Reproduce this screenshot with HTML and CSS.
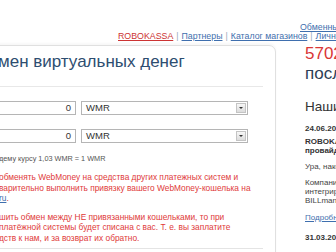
FILE: index.html
```html
<!DOCTYPE html>
<html lang="ru">
<head>
<meta charset="utf-8">
<link rel="stylesheet" href="styles.css">
</head>
<body>
<div class="page">
  <div class="header">
    <div class="nav-top"><a href="#">Обменные пункты</a></div>
    <div class="nav">
      <a class="red" href="#">ROBOKASSA</a><span class="sep">|</span><a href="#">Партнеры</a><span class="sep">|</span><a href="#">Каталог магазинов</a><span class="sep">|</span><a href="#">Личный кабинет</a>
    </div>
  </div>
  <div class="main">
    <div class="card">
      <div class="card-head">
        <h1 class="title">мен виртуальных денег</h1>
      </div>
      <div class="form">
        <div class="row">
          <div class="input">0</div>
          <div class="select"><span>WMR</span><span class="arrow"></span></div>
        </div>
        <div class="row">
          <div class="input">0</div>
          <div class="select"><span>WMR</span><span class="arrow"></span></div>
        </div>
        <div class="rate">дему курсу 1,03 WMR = 1 WMR</div>
        <p class="warn">обменять WebMoney на средства других платежных систем и<br>варительно выполнить привязку вашего WebMoney-кошелька на<br><a href="#">ru</a>.</p>
        <p class="warn">шить обмен между НЕ привязанными кошельками, то при<br>платёжной системы будет списана с вас. Т. е. вы заплатите<br>дств к нам, и за возврат их обратно.</p>
      </div>
      <div class="card-foot"></div>
    </div>
    <div class="side">
      <div class="count">5702</div>
      <div class="count-label">последних</div>
      <h2 class="news-title">Наши новости</h2>
      <div class="date">24.06.2010</div>
      <div class="news-head">ROBOKASSA<br>провайдер</div>
      <p class="news-text">Ура, наконец</p>
      <p class="news-text">Компания<br>интегрировала<br>BILLmanager</p>
      <a class="more" href="#">Подробнее</a>
      <div class="date last">31.03.2010</div>
    </div>
  </div>
</div>
</body>
</html>
```
FILE: styles.css
```css
html, body {
  margin: 0;
  padding: 0;
  background: #fff;
  overflow: hidden;
}
body {
  width: 336px;
  height: 252px;
  font-family: "Liberation Sans", Arial, sans-serif;
  color: #333;
}
a { color: #3f6fae; }
.page { width: 336px; }
.header {
  height: 41px;
  box-sizing: border-box;
  padding: 23px 0 0 118px;
  font-size: 8.8px;
  line-height: 9px;
  white-space: nowrap;
}
.nav-top { padding-left: 182px; }
.nav a { color: #3f6fae; }
.nav a.red { color: #cc3333; }
.sep { color: #9ab; margin: 0 3px; }
.main {
  display: flex;
  margin-left: -20px;
  margin-top: 4px;
}
.card {
  flex: 0 0 296px;
  height: 220px;
  box-sizing: border-box;
  border: 1px solid #e0e0e0;
  border-radius: 0 7px 0 0;
  box-shadow: 0 -2px 2px rgba(0, 0, 0, 0.03);
  position: relative;
}
.card-head {
  height: 41px;
  margin-right: 12px;
  border-bottom: 1px solid #e8e8e8;
  padding-left: 17px;
  box-sizing: border-box;
}
.title {
  margin: 0;
  padding-top: 6px;
  font-weight: normal;
  font-size: 17px;
  line-height: 20px;
  color: #2d4d70;
}
.form { padding: 14px 0 0 0; }
.row {
  display: flex;
  height: 14px;
  margin-bottom: 14px;
}
.input {
  width: 95px;
  box-sizing: border-box;
  border: 1px solid #b5b5b5;
  text-align: right;
  padding-right: 4px;
  font-size: 9.5px;
  line-height: 12px;
  color: #333;
}
.select {
  margin-left: 5px;
  width: 167px;
  box-sizing: border-box;
  border: 1px solid #b5b5b5;
  font-size: 9.5px;
  line-height: 12px;
  padding-left: 4px;
  display: flex;
  justify-content: space-between;
  color: #333;
}
.arrow {
  width: 10px;
  height: 10px;
  margin: 1px 1px 0 0;
  border: 1px solid #c4c4c4;
  box-sizing: border-box;
  background: linear-gradient(#f7f7f7, #dcdcdc);
  position: relative;
}
.arrow::after {
  content: "";
  position: absolute;
  left: 2px;
  top: 3px;
  border-left: 2px solid transparent;
  border-right: 2px solid transparent;
  border-top: 2px solid #333;
}
.rate {
  padding-left: 18px;
  margin-top: -3px;
  font-size: 7.3px;
  line-height: 10px;
  color: #555;
}
.warn {
  margin: 8px 0 0 0;
  padding-left: 18px;
  font-size: 8.35px;
  line-height: 10.5px;
  color: #e03a3a;
  white-space: nowrap;
}
.warn a { color: #3f6fae; }
.card-foot {
  position: absolute;
  left: 0;
  right: 12px;
  top: 202px;
  border-top: 1px solid #e4e4e4;
}
.side {
  margin-left: 29px;
  white-space: nowrap;
  margin-top: -1px;
}
.count {
  font-size: 17px;
  line-height: 20px;
  color: #d93636;
}
.count-label {
  font-size: 17px;
  line-height: 20px;
  color: #2d3e55;
}
.news-title {
  margin: 15px 0 0 0;
  font-weight: normal;
  font-size: 13.5px;
  line-height: 16px;
  color: #333;
}
.date {
  margin-top: 9px;
  font-weight: bold;
  font-size: 8px;
  line-height: 10px;
  color: #333;
}
.news-head {
  margin-top: 3px;
  font-weight: bold;
  font-size: 8px;
  line-height: 9px;
  color: #333;
}
.news-text {
  margin: 7px 0 0 0;
  font-size: 8px;
  line-height: 9px;
  color: #444;
}
.more {
  display: block;
  margin-top: 8px;
  font-size: 8px;
  line-height: 10px;
}
.date.last { margin-top: 10px; }
```
